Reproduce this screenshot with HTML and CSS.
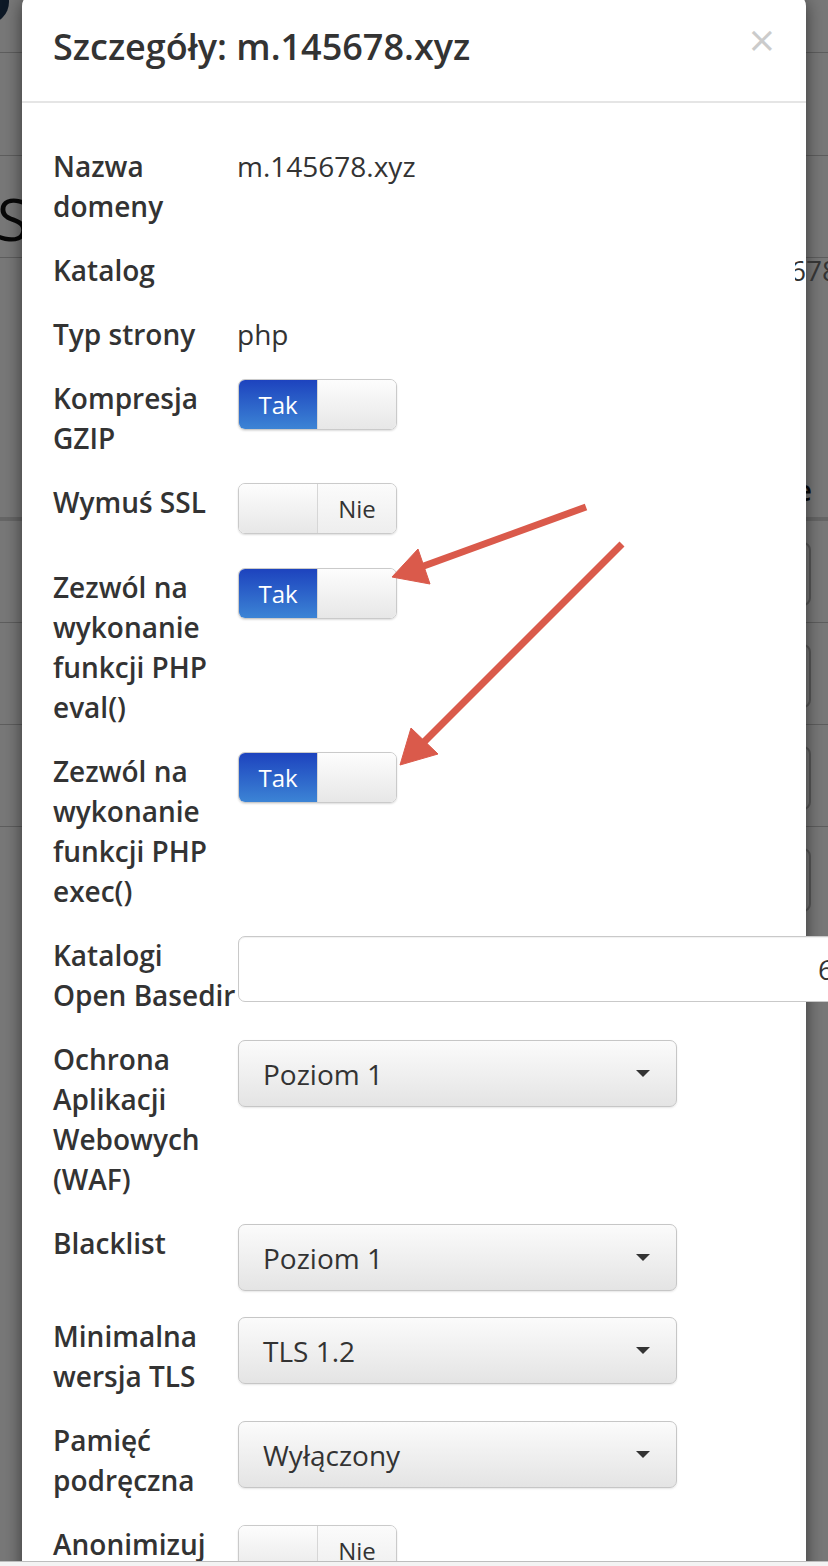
FILE: index.html
```html
<!DOCTYPE html>
<html lang="pl">
<head>
<meta charset="utf-8">
<title>Szczegóły: m.145678.xyz</title>
<link rel="stylesheet" href="styles.css">
</head>
<body>
<div class="page">
  <div class="page-top"><div class="avatar"></div></div>
  <div class="page-sec"></div>
  <div class="page-sec page-heading">S</div>
  <div class="page-sec page-tall"><span class="page-word">ie</span></div>
  <div class="page-row"><div class="page-input"></div></div>
  <div class="page-row"><div class="page-input"></div></div>
  <div class="page-row"><div class="page-input"></div></div>
  <div class="page-row page-last"><div class="page-input"></div></div>
</div>
<div class="backdrop"></div>

<div class="modal">
  <div class="modal-header">
    <h4 class="modal-title">Szczegóły: m.145678.xyz</h4>
    <span class="close">×</span>
  </div>
  <div class="modal-body">
    <div class="row"><div class="label">Nazwa domeny</div><div class="value">m.145678.xyz</div></div>
    <div class="row"><div class="label">Katalog</div><div class="value path"><span>678</span></div></div>
    <div class="row"><div class="label">Typ strony</div><div class="value">php</div></div>
    <div class="row"><div class="label">Kompresja GZIP</div><div class="value">
      <div class="toggle"><span class="half on">Tak</span><span class="half blank"></span></div>
    </div></div>
    <div class="row"><div class="label">Wymuś SSL</div><div class="value">
      <div class="toggle"><span class="half blank"></span><span class="half off">Nie</span></div>
    </div></div>
    <div class="row"><div class="label">Zezwól na wykonanie funkcji PHP eval()</div><div class="value">
      <div class="toggle"><span class="half on">Tak</span><span class="half blank"></span></div>
    </div></div>
    <div class="row"><div class="label">Zezwól na wykonanie funkcji PHP exec()</div><div class="value">
      <div class="toggle"><span class="half on">Tak</span><span class="half blank"></span></div>
    </div></div>
    <div class="row"><div class="label">Katalogi Open&nbsp;Basedir</div><div class="value">
      <div class="input-wide">645678</div>
    </div></div>
    <div class="row"><div class="label">Ochrona Aplikacji Webowych (WAF)</div><div class="value">
      <div class="select"><span>Poziom 1</span><span class="caret"></span></div>
    </div></div>
    <div class="row"><div class="label">Blacklist</div><div class="value">
      <div class="select"><span>Poziom 1</span><span class="caret"></span></div>
    </div></div>
    <div class="row"><div class="label">Minimalna wersja TLS</div><div class="value">
      <div class="select"><span>TLS 1.2</span><span class="caret"></span></div>
    </div></div>
    <div class="row"><div class="label">Pamięć podręczna</div><div class="value">
      <div class="select"><span>Wyłączony</span><span class="caret"></span></div>
    </div></div>
    <div class="row"><div class="label">Anonimizuj</div><div class="value">
      <div class="toggle"><span class="half blank"></span><span class="half off">Nie</span></div>
    </div></div>
  </div>
</div>

<svg class="annotations" width="828" height="1566" viewBox="0 0 828 1566">
  <g fill="#da5a4b" stroke="#da5a4b">
    <line x1="586" y1="507" x2="421" y2="567" stroke-width="7"/>
    <polygon points="392,577 418,549 430,584" stroke-width="1"/>
    <line x1="622" y1="544" x2="422" y2="744" stroke-width="7"/>
    <polygon points="400,765 411,728 438,754" stroke-width="1"/>
  </g>
</svg>

<div class="bottom-bar"></div>
</body>
</html>
```

FILE: styles.css
```css
html, body {
  margin: 0;
  padding: 0;
  overflow: hidden;
}

body {
  position: relative;
  width: 828px;
  height: 1566px;
  background: #ffffff;
  font-family: "Open Sans", "Liberation Sans", sans-serif;
  color: #333333;
}

/* ---------- underlying page (dimmed) ---------- */
.page {
  width: 828px;
}

.page-top {
  height: 52px;
  border-bottom: 1px solid #c8c8c8;
  display: flex;
  align-items: flex-start;
}

.avatar {
  width: 44px;
  height: 44px;
  border-radius: 50%;
  background: #1f3552;
  margin-left: -35px;
  margin-top: -20px;
}

.page-sec {
  height: 102px;
  border-bottom: 1px solid #c8c8c8;
}

.page-heading {
  box-sizing: border-box;
  padding-top: 34px;
  font-size: 58px;
  line-height: 58px;
  margin-left: -3px;
  color: #111111;
  white-space: nowrap;
}

.page-tall {
  height: 263px;
  border-bottom: 4px solid #d8d8d8;
  display: flex;
  justify-content: flex-end;
  align-items: flex-start;
  box-sizing: border-box;
  padding: 212px 16px 0 0;
}

.page-word {
  font-size: 28px;
  line-height: 40px;
  font-weight: 600;
  color: #111111;
}

.page-row {
  height: 102px;
  border-bottom: 1px solid #c8c8c8;
  display: flex;
  justify-content: flex-end;
  align-items: flex-start;
  box-sizing: border-box;
  padding: 21px 17px 0 0;
}

.page-last {
  border-bottom: none;
}

.page-input {
  width: 300px;
  height: 64px;
  box-sizing: border-box;
  border: 2px solid #bcbcbc;
  border-radius: 8px;
}

.backdrop {
  position: absolute;
  inset: 0;
  background: rgba(0, 0, 0, 0.53);
}

/* ---------- modal ---------- */
.modal {
  position: absolute;
  left: 22px;
  top: -6px;
  width: 784px;
  height: 1620px;
  background: #ffffff;
  border-radius: 12px;
  box-shadow: 0 5px 18px rgba(0, 0, 0, 0.55);
}

.modal-header {
  display: flex;
  justify-content: space-between;
  align-items: flex-start;
  padding: 33px 31px 34px 31px;
  border-bottom: 2px solid #e5e5e5;
}

.modal-title {
  margin: 0;
  font-size: 36px;
  line-height: 40px;
  font-weight: 600;
  color: #333333;
}

.close {
  font-size: 46px;
  line-height: 46px;
  font-weight: 400;
  color: #000000;
  opacity: 0.2;
  margin-top: -11px;
}

.modal-body {
  display: flex;
  flex-direction: column;
  gap: 24px;
  padding: 43px 30px 0 31px;
}

.row {
  display: flex;
  align-items: flex-start;
}

.label {
  flex: none;
  width: 170px;
  margin-right: 14px;
  font-size: 28px;
  line-height: 40px;
  font-weight: 600;
  color: #333333;
}

.value {
  flex: 1;
  min-width: 0;
  font-size: 28px;
  line-height: 40px;
  color: #333333;
}

.path {
  white-space: nowrap;
  padding-left: 553px;
}

.path span {
  display: inline-block;
  clip-path: inset(0 0 0 5px);
}

/* toggle switch */
.toggle {
  display: flex;
  width: 159px;
  height: 51px;
  box-sizing: border-box;
  margin: 1px 0 9px 1px;
  border: 1px solid #cacaca;
  border-radius: 7px;
  overflow: hidden;
  box-shadow: 0 1px 2px rgba(0, 0, 0, 0.14);
}

.half {
  flex: 1;
  display: flex;
  align-items: center;
  justify-content: center;
  font-size: 24px;
  line-height: 1;
}

.half + .half {
  border-left: 1px solid #d6d6d6;
}

.half.on {
  background: linear-gradient(#1d43be, #3c84d5);
  color: #ffffff;
}

.half.blank {
  background: linear-gradient(#fdfdfd, #e7e7e7);
}

.half.off {
  background: linear-gradient(#fbfbfb, #eeeeee);
  color: #333333;
}

/* inputs */
.input-wide {
  width: 680px;
  height: 66px;
  box-sizing: border-box;
  margin: 1px 0 0 1px;
  border: 1px solid #c9c9c9;
  border-radius: 7px;
  background: #ffffff;
  box-shadow: inset 0 1px 1px rgba(0, 0, 0, 0.06);
  display: flex;
  align-items: center;
  padding-left: 579px;
  white-space: nowrap;
  overflow: hidden;
}

.select {
  width: 439px;
  height: 67px;
  box-sizing: border-box;
  margin: 1px 0 1px 1px;
  border: 1px solid #c6c6c6;
  border-radius: 7px;
  background: linear-gradient(#fbfbfb, #e4e4e4);
  box-shadow: 0 1px 2px rgba(0, 0, 0, 0.1);
  display: flex;
  align-items: center;
  justify-content: space-between;
  padding: 0 26px 0 24px;
}

.caret {
  width: 0;
  height: 0;
  border-left: 7px solid transparent;
  border-right: 7px solid transparent;
  border-top: 7px solid #333333;
}

/* annotation arrows */
.annotations {
  position: absolute;
  left: 0;
  top: 0;
  pointer-events: none;
}

.bottom-bar {
  position: absolute;
  left: 0;
  right: 0;
  bottom: 0;
  height: 4px;
  background: #f3f3f3;
  border-top: 1px solid #bdbdbd;
}
```
